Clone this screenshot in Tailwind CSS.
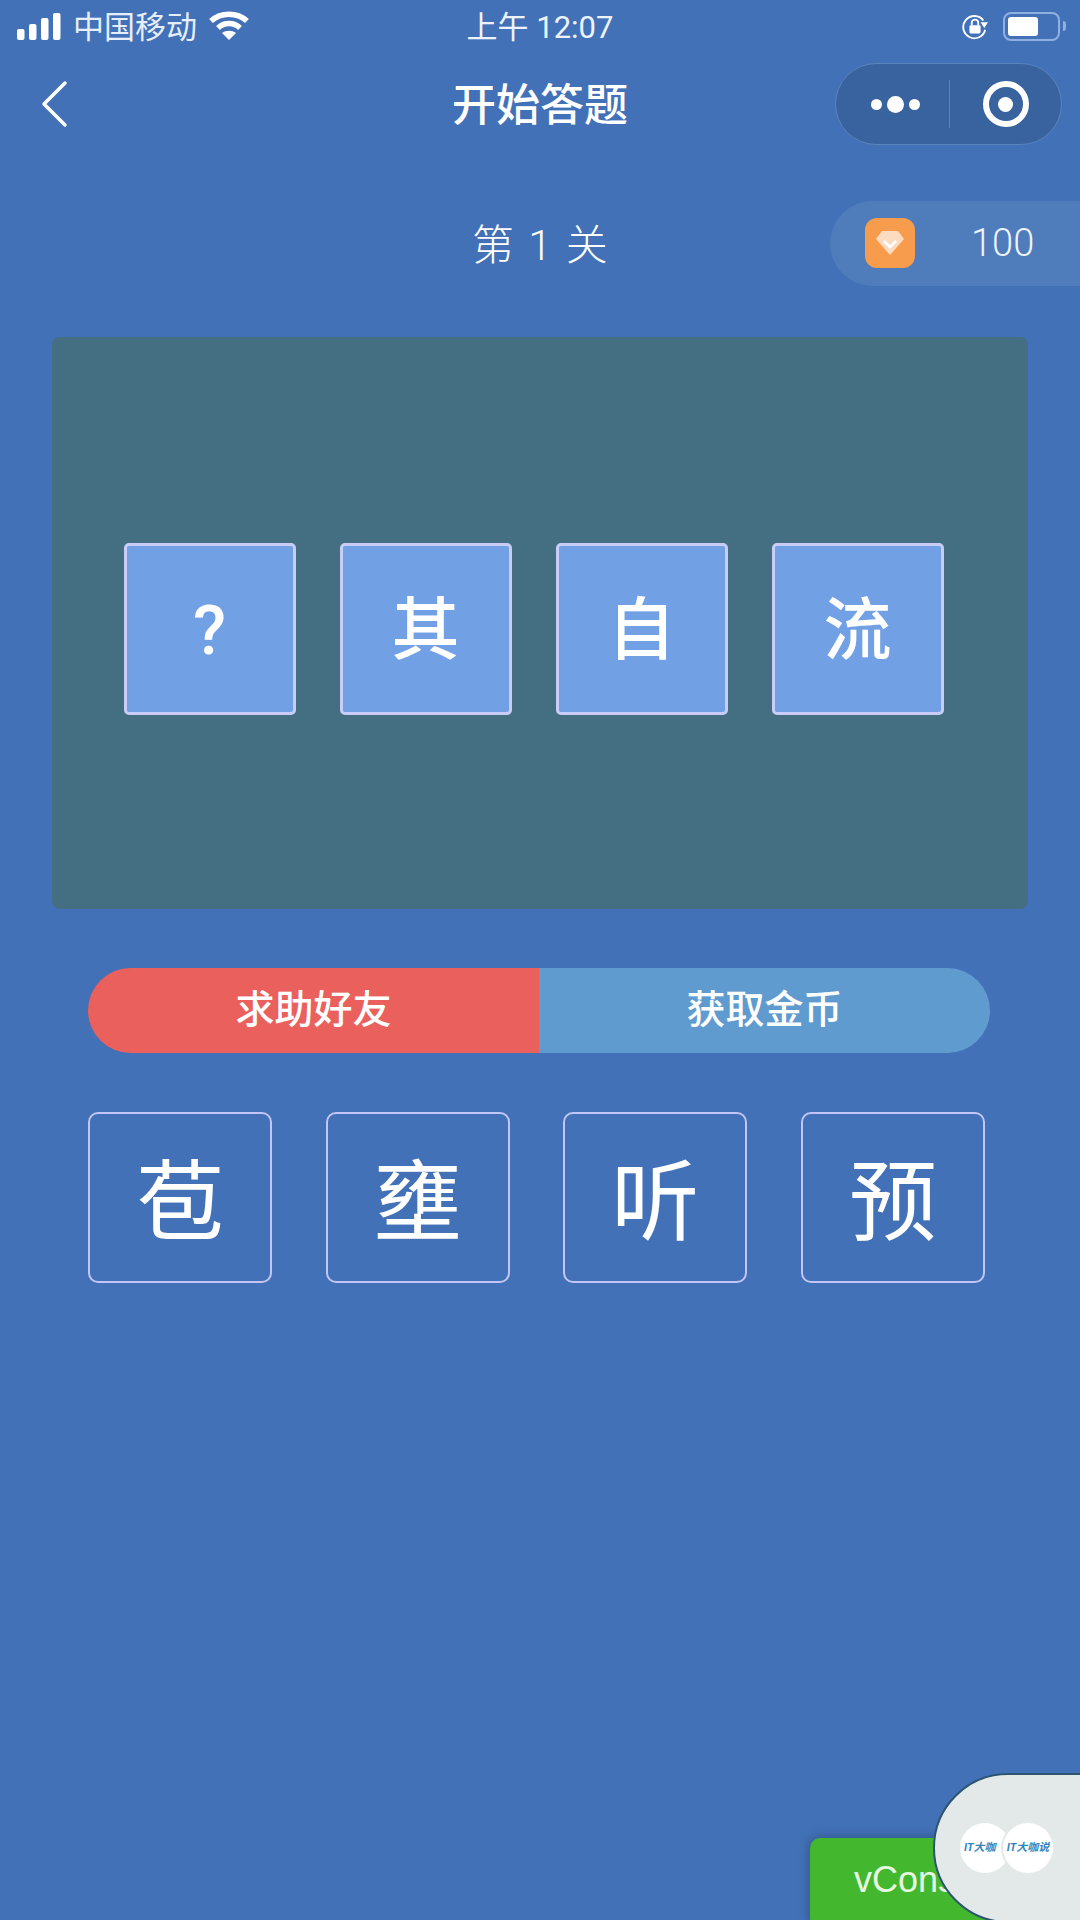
<!DOCTYPE html>
<html lang="zh-CN">
<head>
  <meta charset="UTF-8" />
  <meta name="viewport" content="width=device-width, initial-scale=1.0" />
  <title>开始答题</title>
  <script src="https://cdn.jsdelivr.net/npm/@tailwindcss/browser@4"></script>
</head>
<body class="bg-[#4271b7] font-['Roboto','Noto_Sans_CJK_SC',sans-serif] text-white">
  <div class="relative w-[1080px] h-[1920px] overflow-hidden">

    <!-- status bar -->
    <div class="h-[52px] pl-[17px] pr-[14px] flex items-center justify-between relative">
      <div class="flex items-center">
        <svg width="44" height="28" viewBox="0 0 44 28" fill="#fff">
          <rect x="0" y="17" width="7.5" height="11" rx="2"/>
          <rect x="12" y="12" width="7.5" height="16" rx="2"/>
          <rect x="24" y="6" width="7.5" height="22" rx="2"/>
          <rect x="36" y="1" width="7.5" height="27" rx="2"/>
        </svg>
        <span class="ml-[12px] mt-[2px] text-[31px] leading-none text-[#e6eefa]">中国移动</span>
        <svg class="ml-[12px]" width="40" height="30" viewBox="0 0 40 30" fill="none" stroke="#fff" stroke-width="5.5">
          <path d="M2 10C12 1 28 1 38 10"/>
          <path d="M9 17C15 11 25 11 31 17"/>
          <path d="M20 29L13 22C17 19 23 19 27 22Z" fill="#fff" stroke="none"/>
        </svg>
      </div>
      <span class="absolute left-0 right-0 mt-[2px] text-center text-[31px] leading-none text-[#eef3fb]">上午 12:07</span>
      <div class="flex items-center">
        <svg class="mt-[2px]" width="26" height="26" viewBox="0 0 28 28" fill="none">
          <path d="M23 7A12 12 0 1 0 25 17" stroke="#fff" stroke-width="2"/>
          <path d="M20 9L28 9L24 15Z" fill="#fff"/>
          <rect x="8" y="12" width="12" height="9" rx="1.5" fill="#fff"/>
          <path d="M10.5 12V9.5a3.5 3.5 0 0 1 7 0V12" stroke="#fff" stroke-width="2"/>
        </svg>
        <div class="ml-[15px] w-[57px] h-[29px] border-2 border-[#8fb0e0] rounded-[8px] p-[3px]">
          <div class="w-[30px] h-full bg-white rounded-[3px]"></div>
        </div>
        <div class="ml-[3px] w-[3px] h-[10px] bg-[#8fb0e0] rounded-r-full"></div>
      </div>
    </div>

    <!-- nav bar -->
    <div class="relative h-[106px] flex items-center justify-center">
      <svg class="absolute left-[40px] top-[28px]" width="32" height="48" viewBox="0 0 32 48" fill="none" stroke="#fff" stroke-width="3.5" stroke-linecap="round" stroke-linejoin="round">
        <path d="M25 3L4 24L25 45"/>
      </svg>
      <h1 class="text-[44px] font-medium leading-none mt-[2px]">开始答题</h1>
      <div class="absolute left-[835px] top-[11px] w-[227px] h-[82px] rounded-full bg-[#38639f] border border-[#5b83bd] flex items-center">
        <div class="w-[113px] flex items-center justify-center gap-[5px] pl-[6px]">
          <span class="w-[11px] h-[11px] rounded-full bg-white"></span>
          <span class="w-[17px] h-[17px] rounded-full bg-white"></span>
          <span class="w-[11px] h-[11px] rounded-full bg-white"></span>
        </div>
        <div class="w-px h-[48px] bg-[#5b83bd]"></div>
        <div class="flex-1 flex items-center justify-center">
          <div class="w-[46px] h-[46px] rounded-full border-[6px] border-white flex items-center justify-center">
            <span class="w-[15px] h-[15px] rounded-full bg-white"></span>
          </div>
        </div>
      </div>
    </div>

    <!-- level and coins -->
    <div class="relative mt-[43px] h-[85px] flex items-center justify-center">
      <span class="text-[42px] leading-none font-light [word-spacing:4px] mt-[4px]">第 1 关</span>
      <div class="absolute left-[830px] top-0 w-[260px] h-[85px] rounded-l-full bg-[#4f7cba] flex items-center pl-[35px]">
        <div class="w-[50px] h-[50px] mb-[2px] rounded-[12px] bg-[#f79c4d] flex items-center justify-center">
          <svg width="30" height="26" viewBox="0 0 30 26">
            <path d="M7 1H23L29 9L15 25L1 9Z" fill="#fbdcc0"/>
            <path d="M9 11L15 17L21 11" fill="none" stroke="#fff" stroke-width="2.5"/>
          </svg>
        </div>
        <span class="ml-[56px] mb-[2px] text-[38px] leading-none font-light text-[#eef3fb]">100</span>
      </div>
    </div>

    <!-- question card -->
    <div class="mt-[51px] mx-[52px] h-[572px] rounded-[8px] bg-[#446e82] flex items-center justify-center gap-[44px] pt-[11px] pr-[13px]">
      <div class="w-[172px] h-[172px] rounded-[5px] border-[3px] border-[#c9ccf5] bg-[#72a0e5] flex items-center justify-center pt-[5px] text-[68px] font-medium leading-none">?</div>
      <div class="w-[172px] h-[172px] rounded-[5px] border-[3px] border-[#c9ccf5] bg-[#72a0e5] flex items-center justify-center pt-[5px] text-[68px] font-medium leading-none">其</div>
      <div class="w-[172px] h-[172px] rounded-[5px] border-[3px] border-[#c9ccf5] bg-[#72a0e5] flex items-center justify-center pt-[5px] text-[68px] font-medium leading-none">自</div>
      <div class="w-[172px] h-[172px] rounded-[5px] border-[3px] border-[#c9ccf5] bg-[#72a0e5] flex items-center justify-center pt-[5px] text-[68px] font-medium leading-none">流</div>
    </div>

    <!-- help buttons -->
    <div class="mt-[59px] ml-[88px] w-[902px] h-[85px] flex rounded-full overflow-hidden text-[39px] font-medium leading-none">
      <div class="w-[451px] bg-[#ea605c] flex items-center justify-center">求助好友</div>
      <div class="w-[451px] bg-[#609bd0] flex items-center justify-center">获取金币</div>
    </div>

    <!-- answer options -->
    <div class="mt-[59px] ml-[88px] flex gap-[53.7px]">
      <div class="w-[184px] h-[171px] rounded-[10px] border-2 border-[#c2c5f5] flex items-center justify-center pt-[11px] text-[88px] leading-none">苞</div>
      <div class="w-[184px] h-[171px] rounded-[10px] border-2 border-[#c2c5f5] flex items-center justify-center pt-[11px] text-[88px] leading-none">壅</div>
      <div class="w-[184px] h-[171px] rounded-[10px] border-2 border-[#c2c5f5] flex items-center justify-center pt-[11px] text-[88px] leading-none">听</div>
      <div class="w-[184px] h-[171px] rounded-[10px] border-2 border-[#c2c5f5] flex items-center justify-center pt-[11px] text-[88px] leading-none">预</div>
    </div>

    <!-- vConsole button -->
    <div class="absolute left-[810px] top-[1838px] w-[200px] h-[90px] rounded-[10px] bg-[#43b82e] shadow-[0_0_12px_rgba(0,0,0,0.3)] pl-[44px] pt-[24px] text-[36px] leading-none text-[#e8f8e2] font-['Liberation_Sans',sans-serif]">vConsole</div>

    <!-- floating ad bubble -->
    <div class="absolute left-[933px] top-[1773px] w-[220px] h-[150px] rounded-full bg-[#e3e9e9] border-2 border-[#2c5570] flex items-center pl-[25px]">
      <div class="w-[50px] h-[50px] rounded-full bg-white flex items-center overflow-hidden text-[11px] font-bold italic text-[#2f86bd] whitespace-nowrap pl-[4px] -mr-[7px]">IT大咖</div>
      <div class="relative w-[50px] h-[50px] rounded-full bg-white shadow-[0_0_0_2px_#e3e9e9] flex items-center justify-center overflow-hidden text-[11px] font-bold italic text-[#2f86bd] whitespace-nowrap">IT大咖说</div>
    </div>
  </div>
</body>
</html>
